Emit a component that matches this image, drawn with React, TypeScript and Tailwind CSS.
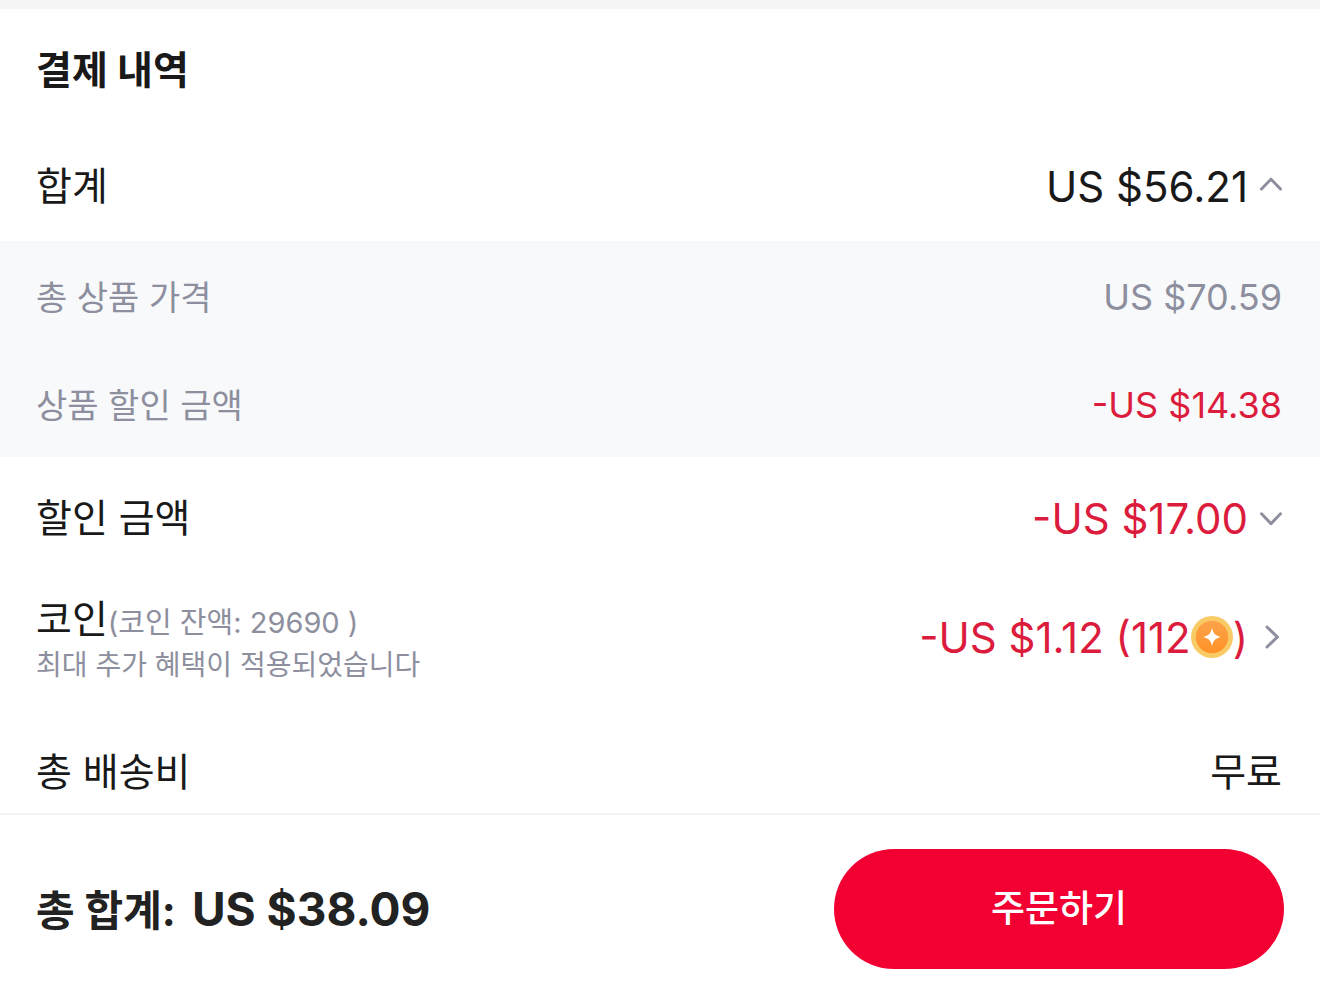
import type { ReactNode } from "react";

const Chevron = ({ d }: { d: string }) => (
  <svg
    viewBox="0 0 22 24"
    className="h-6 w-[22px] shrink-0 text-[#8d8f9e]"
    fill="none"
    stroke="currentColor"
    strokeWidth="3"
    strokeLinecap="round"
    strokeLinejoin="round"
    aria-hidden="true"
  >
    <path d={d} />
  </svg>
);

const Coin = () => (
  <svg viewBox="0 0 42 42" className="h-[42px] w-[42px] shrink-0">
    <title>코인</title>
    <defs>
      <linearGradient id="coin" x1="0" y1="0" x2="0" y2="1">
        <stop offset="0" stopColor="#fda24a" />
        <stop offset="1" stopColor="#ff9226" />
      </linearGradient>
    </defs>
    <circle cx="21" cy="21" r="21" fill="#f9cb66" />
    <circle cx="21" cy="21" r="16.2" fill="url(#coin)" />
    <path
      d="M21 12 C22.4 17.800 24.200 19.600 30 21 C24.200 22.400 22.400 24.200 21 30 C19.600 24.200 17.800 22.400 12 21 C17.800 19.600 19.600 17.800 21 12Z"
      fill="#fff"
    />
  </svg>
);

type RowProps = {
  label: string;
  className: string;
  children: ReactNode;
};

const Row = ({ label, className, children }: RowProps) => (
  <div
    className={`flex items-center justify-between pr-[38px] pl-9 ${className}`}
  >
    <span>{label}</span>
    {children}
  </div>
);

const App = () => {
  return (
    <main className="border-t-[9px] border-[#f5f5f5] bg-white font-['Inter','Noto_Sans_CJK_KR',sans-serif] text-[#191919]">
      <section>
        <h1 className="px-9 pt-7 text-[39px] leading-[66px] font-bold">
          결제 내역
        </h1>
        <Row label="합계" className="mt-6.5 h-28 pt-0.5 text-[39px]">
          <button type="button" className="flex items-center gap-3 text-[42px]">
            US $56.21
            <Chevron d="M1.500 15 L11 5.200 L20.500 15" />
          </button>
        </Row>
        <div className="bg-[#f8f9fb] text-[#8d8f9e]">
          <Row label="총 상품 가격" className="h-27 pt-1 text-[34px]">
            <span className="text-[36px]">US $70.59</span>
          </Row>
          <Row label="상품 할인 금액" className="h-27 pt-1 text-[34px]">
            <span className="text-[36px] text-[#dc1c3c]">-US $14.38</span>
          </Row>
        </div>
        <Row label="할인 금액" className="h-30 pt-0.5 text-[39px]">
          <button
            type="button"
            className="flex items-center gap-3 text-[42px] text-[#dc1c3c]"
          >
            -US $17.00
            <Chevron d="M1.500 7.800 L11 17.600 L20.500 7.800" />
          </button>
        </Row>
        <div className="flex items-center justify-between pt-4 pr-[38px] pl-9">
          <div>
            <p className="text-[39px] leading-[52px]">
              코인
              <span className="text-[29px] text-[#8d8f9e]">
                (코인 잔액: 29690 )
              </span>
            </p>
            <p className="text-[28px] leading-8 text-[#8d8f9e]">
              최대 추가 혜택이 적용되었습니다
            </p>
          </div>
          <button
            type="button"
            className="flex items-center text-[42px] text-[#dc1c3c]"
          >
            -US $1.12 (112
            <Coin />)
            <span className="ml-3 flex">
              <Chevron d="M7 2 L17.400 12 L7 22" />
            </span>
          </button>
        </div>
        <Row label="총 배송비" className="mt-12 h-21 pt-0.5 text-[39px]">
          <span>무료</span>
        </Row>
      </section>
      <footer className="flex items-center justify-between border-t-2 border-[#f2f2f2] px-9 py-[34px]">
        <p className="flex items-baseline gap-4 text-[42px] font-bold text-[#222]">
          총 합계:
          <span className="text-[46px]">US $38.09</span>
        </p>
        <button
          type="button"
          className="h-30 w-[450px] rounded-full bg-[#f20032] text-[37px] font-medium text-white"
        >
          주문하기
        </button>
      </footer>
    </main>
  );
};

export default App;
